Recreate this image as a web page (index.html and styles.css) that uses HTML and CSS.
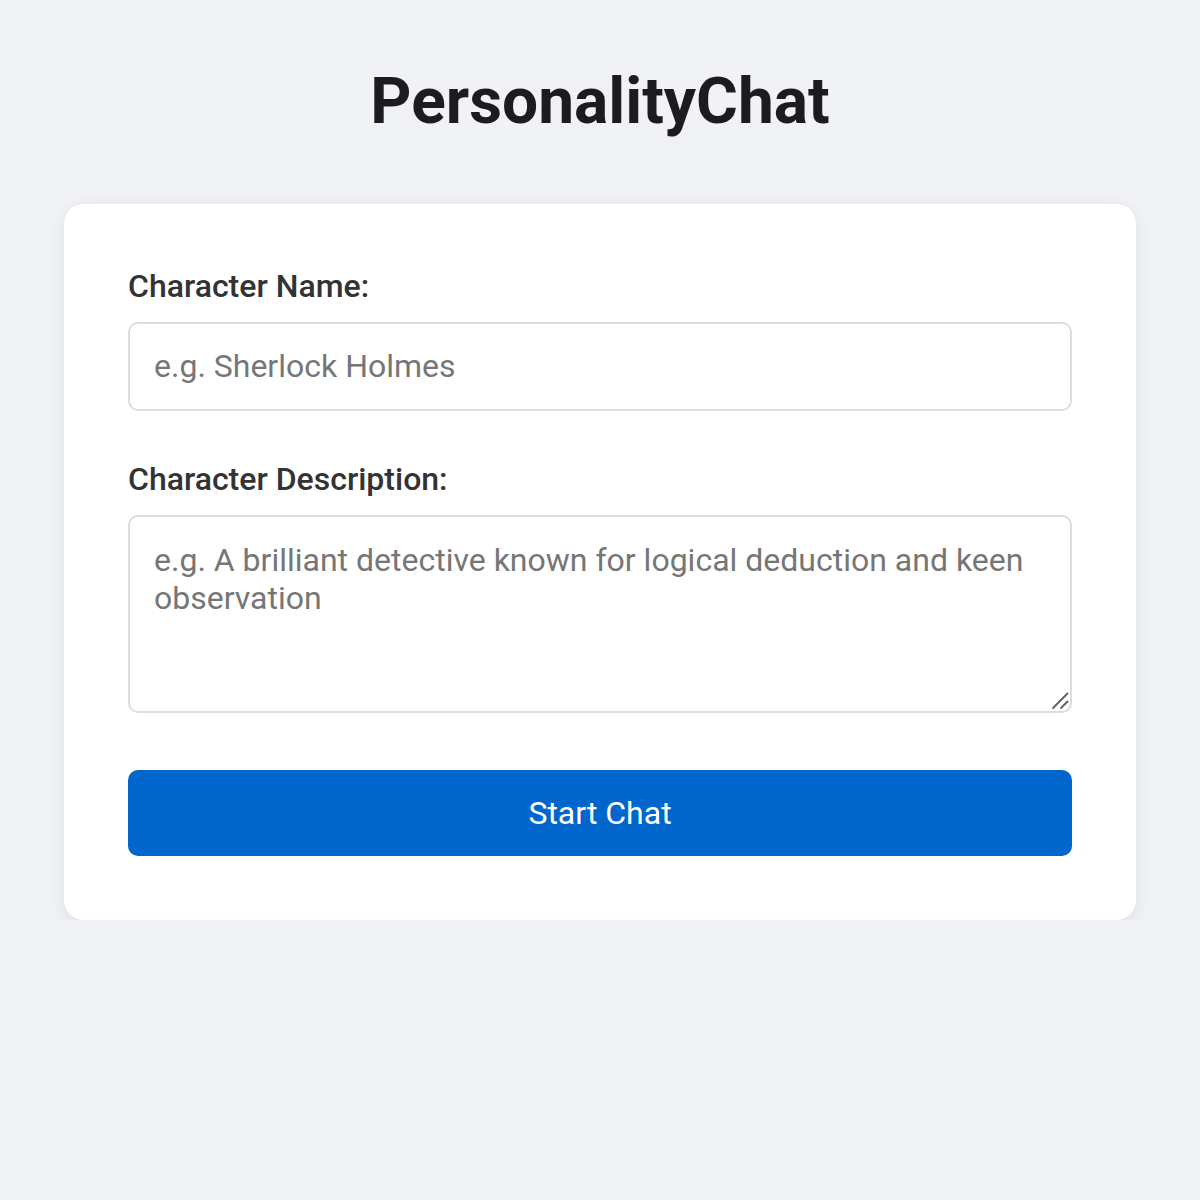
FILE: index.html
```html
<!DOCTYPE html>
<html lang="en">
<head>
<meta charset="utf-8">
<title>PersonalityChat</title>
<link rel="stylesheet" href="styles.css">
</head>
<body>
<main class="page">
  <h1 class="title">PersonalityChat</h1>
  <form class="card">
    <div class="group">
      <label class="label" for="name">Character Name:</label>
      <input class="field" id="name" type="text" placeholder="e.g. Sherlock Holmes">
    </div>
    <div class="group">
      <label class="label" for="desc">Character Description:</label>
      <div class="area-wrap">
        <textarea class="field area" id="desc" placeholder="e.g. A brilliant detective known for logical deduction and keen observation"></textarea>
        <svg class="grip" width="20" height="20" viewBox="0 0 20 20" aria-hidden="true">
          <line x1="3" y1="17" x2="17.5" y2="2.5" stroke="#5f5f5f" stroke-width="1.8" stroke-linecap="round"/>
          <line x1="11" y1="17" x2="17.5" y2="10.5" stroke="#5f5f5f" stroke-width="1.8" stroke-linecap="round"/>
        </svg>
      </div>
    </div>
    <button class="btn" type="button">Start Chat</button>
  </form>
</main>
</body>
</html>
```

FILE: styles.css
```css
html, body {
  margin: 0;
  padding: 0;
  background: #f0f2f5;
  font-family: Roboto, "Liberation Sans", sans-serif;
}
.page {
  padding: 64px 64px 0;
}
.title {
  margin: 0 0 65px;
  font-size: 64px;
  line-height: 75px;
  font-weight: 700;
  color: #1c1c1e;
  text-align: center;
}
.card {
  background: #fff;
  border-radius: 20px;
  padding: 64px;
  box-shadow: 0 4px 16px rgba(0, 0, 0, 0.08);
}
.group {
  display: flex;
  flex-direction: column;
}
.group + .group {
  margin-top: 50px;
}
.label {
  font-size: 32px;
  line-height: 37.5px;
  font-weight: 500;
  color: #333;
  margin-bottom: 16px;
}
.field {
  box-sizing: border-box;
  width: 100%;
  margin: 0;
  font-family: Roboto, "Liberation Sans", sans-serif;
  font-size: 32px;
  line-height: 37.5px;
  padding: 24px;
  border: 2px solid #ddd;
  border-radius: 10px;
  color: #333;
  background: #fff;
  outline: none;
}
.field::placeholder {
  color: #767676;
}
.area-wrap {
  position: relative;
}
.area {
  display: block;
  height: 198px;
  resize: none;
  line-height: 38px;
}
.grip {
  position: absolute;
  right: 2px;
  bottom: 2px;
  pointer-events: none;
}
.btn {
  display: block;
  width: 100%;
  margin-top: 57px;
  padding: 24px;
  border: none;
  border-radius: 10px;
  background: #0066cc;
  color: #fff;
  font-family: Roboto, "Liberation Sans", sans-serif;
  font-size: 32px;
  line-height: 38px;
  font-weight: 400;
  cursor: pointer;
}
```
